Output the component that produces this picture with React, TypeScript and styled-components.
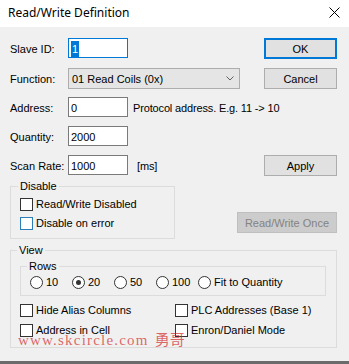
import React from "react";
import styled, { createGlobalStyle } from "styled-components";

const Global = createGlobalStyle`
  html, body { margin: 0; padding: 0; background: #f0f0f0; }
  body {
    font-family: "Liberation Sans", Arial, sans-serif;
    font-size: 11px;
    color: #000;
  }
  * { box-sizing: border-box; }
`;

const Window = styled.div`
  position: relative;
  width: 349px;
  height: 364px;
  display: flex;
  flex-direction: column;
  background: #f0f0f0;
  overflow: hidden;
`;

const TitleBar = styled.div`
  flex: none;
  height: 27px;
  background: #fff;
  display: flex;
  align-items: center;
  padding: 0 9px 2px 8px;
  font-family: "Noto Sans", "Liberation Sans", sans-serif;
  font-size: 12px;
`;

const Title = styled.span`
  flex: 1;
`;

const Body = styled.div`
  flex: 1;
  display: flex;
  flex-direction: column;
  padding: 11px 12px 0 10px;
`;

const FormRow = styled.div<{ $mb?: number }>`
  display: flex;
  align-items: center;
  height: 20px;
  margin-bottom: ${(p) => p.$mb ?? 9}px;
`;

const Label = styled.span`
  flex: none;
  width: 58px;
  padding-top: 2px;
`;

const Field = styled.div<{ $focused?: boolean }>`
  flex: none;
  width: 60px;
  height: 20px;
  background: #fff;
  border: 1px solid ${(p) => (p.$focused ? "#0078d7" : "#7a7a7a")};
  display: flex;
  align-items: center;
  padding: 1px 0 0 2px;
`;

const Selected = styled.span`
  background: #0078d7;
  color: #fff;
  padding: 1px 1px;
  line-height: 14px;
`;

const Hint = styled.span<{ $gap: number }>`
  margin-left: ${(p) => p.$gap}px;
  padding-top: 2px;
  letter-spacing: -0.15px;
`;

const Select = styled.div`
  flex: none;
  width: 172px;
  height: 21px;
  background: #e5e5e5;
  border: 1px solid #adadad;
  display: flex;
  align-items: center;
  justify-content: space-between;
  padding: 1px 5px 0 3px;
`;

const Button = styled.button<{ $default?: boolean; $wide?: boolean }>`
  flex: none;
  margin-left: auto;
  width: ${(p) => (p.$wide ? 100 : 73)}px;
  height: 21px;
  padding: 1px 0 0;
  font: inherit;
  color: #000;
  background: #e1e1e1;
  border: ${(p) => (p.$default ? "2px solid #0078d7" : "1px solid #adadad")};
  &:disabled {
    background: #cccccc;
    border-color: #bfbfbf;
    color: #838383;
  }
`;

const OnceButton = styled(Button)`
  margin-bottom: 6px;
`;

const DisableRow = styled.div`
  display: flex;
  align-items: flex-end;
  margin-top: -4px;
  margin-bottom: 5px;
`;

const Group = styled.fieldset<{ $w: number; $pad: string }>`
  margin: 0;
  width: ${(p) => p.$w}px;
  border: 1px solid #dcdcdc;
  padding: ${(p) => p.$pad};
  min-width: 0;
`;

const Legend = styled.legend<{ $ml?: number }>`
  padding: 0 2px;
  margin-left: ${(p) => p.$ml ?? -3}px;
  line-height: 12px;
  font-size: 11px;
`;

const CheckList = styled.div`
  display: flex;
  flex-direction: column;
  gap: 3px;
`;

const CheckItem = styled.label`
  display: flex;
  align-items: center;
  height: 16px;
  gap: 3px;
  white-space: nowrap;
`;

const Box = styled.span<{ $hover?: boolean }>`
  flex: none;
  width: 13px;
  height: 13px;
  background: #fff;
  border: 1px solid ${(p) => (p.$hover ? "#2d7db8" : "#333")};
`;

const RadioRow = styled.div`
  display: flex;
  align-items: center;
  height: 16px;
`;

const RadioItem = styled.label<{ $last?: boolean }>`
  flex: none;
  width: ${(p) => (p.$last ? "auto" : "42px")};
  display: flex;
  align-items: center;
  gap: 3px;
  white-space: nowrap;
`;

const Circle = styled.span<{ $on?: boolean }>`
  flex: none;
  width: 13px;
  height: 13px;
  border-radius: 50%;
  border: 1px solid #333;
  background: #fff;
  display: flex;
  align-items: center;
  justify-content: center;
  &::after {
    content: "";
    display: ${(p) => (p.$on ? "block" : "none")};
    width: 5px;
    height: 5px;
    border-radius: 50%;
    background: #333;
  }
`;

const OptionGrid = styled.div`
  display: grid;
  grid-template-columns: 155px 1fr;
  grid-auto-rows: 16px;
  row-gap: 4px;
  margin-top: 6px;
`;

const Footer = styled.div`
  flex: none;
  height: 3px;
  background: #6b6b6b;
`;

const Watermark = styled.div`
  position: absolute;
  left: 18px;
  top: 328px;
  font-family: "Liberation Serif", serif;
  font-size: 15px;
  letter-spacing: 1.2px;
  color: rgba(210, 40, 40, 0.7);
  white-space: nowrap;
  pointer-events: none;
`;

const Cjk = styled.span`
  font-family: "Noto Sans CJK SC", sans-serif;
  margin-left: 6px;
  letter-spacing: 0;
`;

const Close = () => (
  <svg width="11" height="11" viewBox="0 0 11 11">
    <path d="M0.5 0.5 L10.5 10.5 M10.5 0.5 L0.5 10.5" stroke="#000" strokeWidth="1" />
  </svg>
);

const Chevron = () => (
  <svg width="8" height="5" viewBox="0 0 8 5">
    <path d="M0.5 0.5 L4 4 L7.5 0.5" stroke="#606060" strokeWidth="1" fill="none" />
  </svg>
);

const Check = ({ label, hover }: { label: string; hover?: boolean }) => (
  <CheckItem>
    <Box $hover={hover} />
    <span>{label}</span>
  </CheckItem>
);

const Radio = ({ label, on, last }: { label: string; on?: boolean; last?: boolean }) => (
  <RadioItem $last={last}>
    <Circle $on={on} />
    <span>{label}</span>
  </RadioItem>
);

export default function App() {
  return (
    <Window>
      <Global />
      <TitleBar>
        <Title>Read/Write Definition</Title>
        <Close />
      </TitleBar>
      <Body>
        <FormRow $mb={10}>
          <Label>Slave ID:</Label>
          <Field $focused>
            <Selected>1</Selected>
          </Field>
          <Button $default>OK</Button>
        </FormRow>
        <FormRow>
          <Label>Function:</Label>
          <Select>
            <span>01 Read Coils (0x)</span>
            <Chevron />
          </Select>
          <Button>Cancel</Button>
        </FormRow>
        <FormRow>
          <Label>Address:</Label>
          <Field>0</Field>
          <Hint $gap={5}>Protocol address. E.g. 11 -&gt; 10</Hint>
        </FormRow>
        <FormRow>
          <Label>Quantity:</Label>
          <Field>2000</Field>
        </FormRow>
        <FormRow>
          <Label>Scan Rate:</Label>
          <Field>1000</Field>
          <Hint $gap={9}>[ms]</Hint>
          <Button>Apply</Button>
        </FormRow>
        <DisableRow>
          <Group $w={165} $pad="4px 9px 7px">
            <Legend $ml={-2}>Disable</Legend>
            <CheckList>
              <Check label="Read/Write Disabled" />
              <Check label="Disable on error" hover />
            </CheckList>
          </Group>
          <OnceButton $wide disabled>
            Read/Write Once
          </OnceButton>
        </DisableRow>
        <Group $w={327} $pad="4px 11px 9px 9px">
          <Legend $ml={-3}>View</Legend>
          <Group $w={306} $pad="2px 9px 5px">
            <Legend $ml={-3}>Rows</Legend>
            <RadioRow>
              <Radio label="10" />
              <Radio label="20" on />
              <Radio label="50" />
              <Radio label="100" />
              <Radio label="Fit to Quantity" last />
            </RadioRow>
          </Group>
          <OptionGrid>
            <Check label="Hide Alias Columns" />
            <Check label="PLC Addresses (Base 1)" />
            <Check label="Address in Cell" />
            <Check label="Enron/Daniel Mode" />
          </OptionGrid>
        </Group>
      </Body>
      <Footer />
      <Watermark>
        www.skcircle.com<Cjk>勇哥</Cjk>
      </Watermark>
    </Window>
  );
}
